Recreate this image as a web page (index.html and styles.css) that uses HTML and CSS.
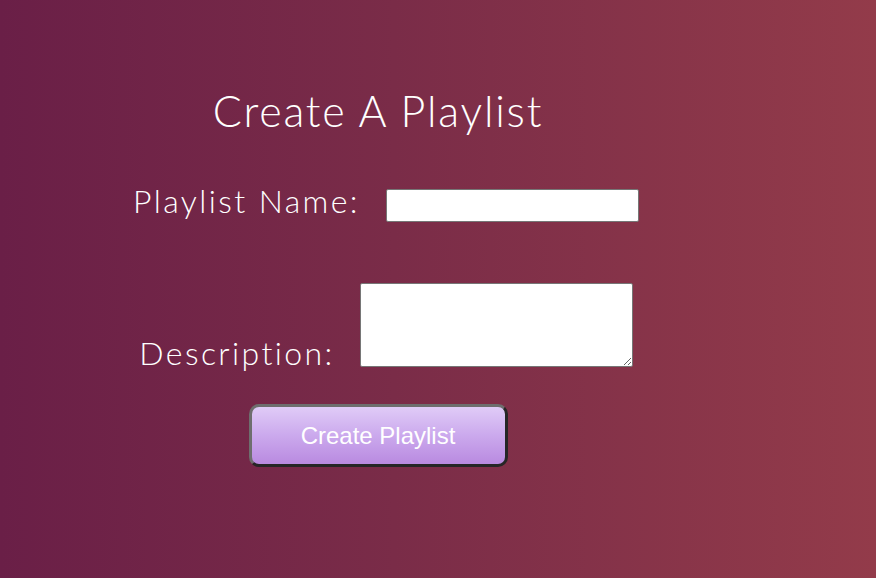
FILE: index.html
```html
<!DOCTYPE html>
<html>
<head>
<meta charset="utf-8">
<link rel="stylesheet" href="styles.css">
</head>
<body>
<main class="page">
  <h1 class="title">Create A Playlist</h1>
  <form class="form">
    <div class="row row-name">
      <label class="label" for="name">Playlist Name:</label>
      <input class="input" id="name" type="text">
    </div>
    <div class="row row-desc">
      <label class="label" for="desc">Description:</label>
      <textarea class="textarea" id="desc"></textarea>
    </div>
    <div class="actions">
      <button class="button" type="button">Create Playlist</button>
    </div>
  </form>
</main>
</body>
</html>
```

FILE: styles.css
```css
html, body {
  margin: 0;
  height: 100%;
}
body {
  background: linear-gradient(to right, #6a1f47 0%, #7a2c48 45%, #933b4a 100%);
  font-family: "Lato", "Open Sans", sans-serif;
  color: #ffffff;
}
.page {
  width: 756px;
  padding-top: 87px;
}
.title {
  margin: 0;
  text-align: center;
  font-weight: 300;
  font-size: 43px;
  line-height: 48px;
  letter-spacing: 1.8px;
}
.form {
  display: flex;
  flex-direction: column;
  align-items: center;
}
.row {
  display: flex;
  align-items: flex-end;
  margin-left: 16px;
}
.row-name {
  margin-top: 48px;
  gap: 26px;
}
.row-desc {
  margin-top: 61px;
  gap: 25px;
}
.label {
  font-size: 32px;
  font-weight: 300;
  line-height: 36px;
  letter-spacing: 2.4px;
}
.row-name .label {
  margin-bottom: 3px;
}
.row-desc .label {
  margin-bottom: -4px;
}
.input {
  width: 253px;
  height: 33px;
  box-sizing: border-box;
  border: 1px solid #767676;
  border-radius: 2px;
  background: #fff;
  margin: 0;
}
.textarea {
  width: 273px;
  height: 84px;
  box-sizing: border-box;
  border: 1px solid #767676;
  border-radius: 2px;
  background: #fff;
  margin: 0;
  display: block;
}
.actions {
  margin-top: 37px;
}
.button {
  width: 259px;
  height: 63px;
  box-sizing: border-box;
  border-width: 3px;
  border-style: solid;
  border-color: #6e6e6e #262626 #262626 #6e6e6e;
  border-radius: 10px;
  background: linear-gradient(to bottom, #e0cbf7 0%, #cba9ed 50%, #b98ae0 100%);
  color: #ffffff;
  font-family: "Liberation Sans", Arial, sans-serif;
  font-size: 24px;
  padding: 0;
}
```
